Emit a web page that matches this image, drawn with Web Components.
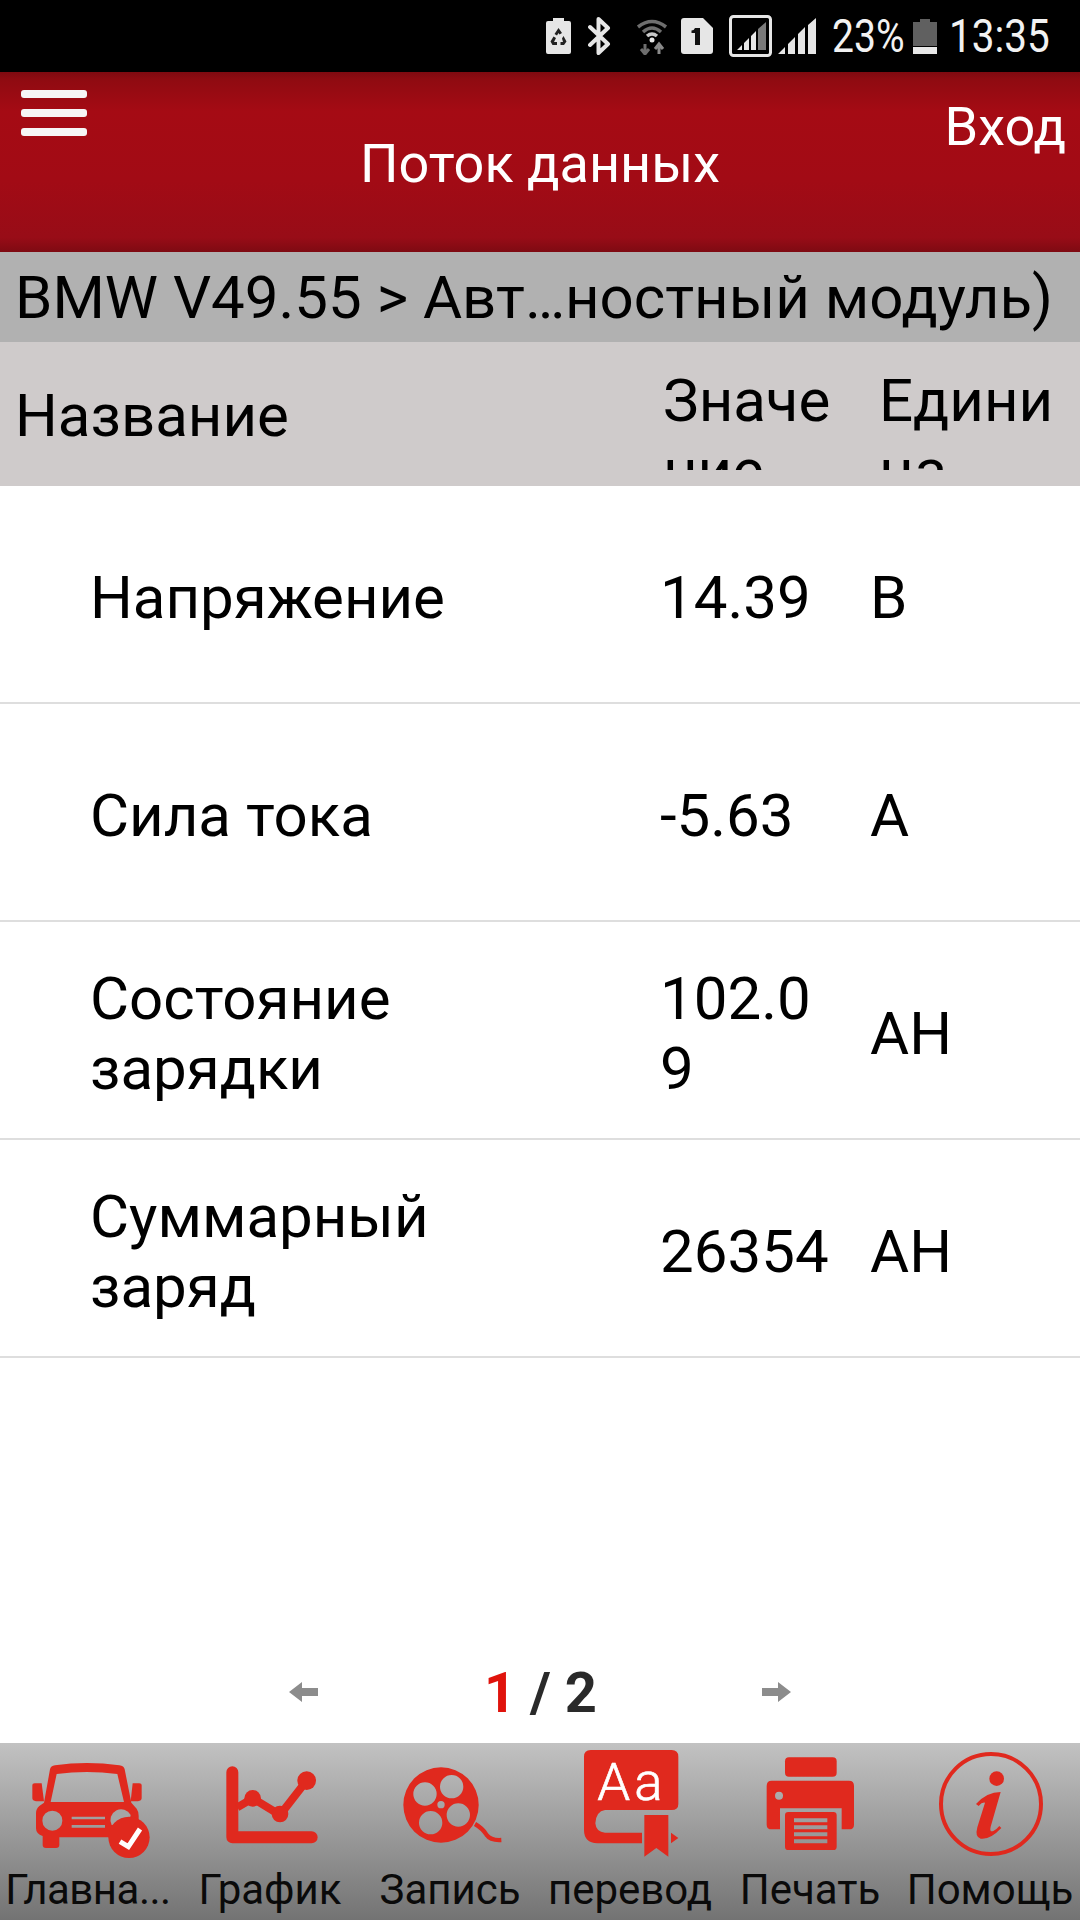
<!DOCTYPE html>
<html lang="ru"><head><meta charset="utf-8"><title>Поток данных</title>
<style>
html,body{margin:0;padding:0;background:#fff}
body{width:1080px;height:1920px;overflow:hidden;font-family:Roboto,"Noto Sans",sans-serif;color:#000;display:flex;flex-direction:column}
main-list{flex:1}
</style></head><body>
<status-bar></status-bar>
<app-header title-text="Поток данных" action="Вход"></app-header>
<crumb-bar>BMW V49.55 &gt; Авт…ностный модуль)</crumb-bar>
<table-head></table-head>
<main-list>
  <data-row name="Напряжение" value="14.39" unit="В"></data-row>
  <data-row name="Сила тока" value="-5.63" unit="А"></data-row>
  <data-row name="Состояние зарядки" value="102.09" unit="АН"></data-row>
  <data-row name="Суммарный заряд" value="26354" unit="АН"></data-row>
</main-list>
<tool-bar>
  <tool-item label="Главна..." style="--ls:-.5px;--mr:4px">
    <svg viewBox="0 39 540 360" width="180" height="120" fill="#e0291e"><path fill-rule="evenodd" d="M132 218 150 118Q152 108 165 106 260 92 358 106 372 108 374 118L394 218 410 236Q416 244 416 258V305Q416 320 400 322H178V345Q178 354 168 354H138Q128 354 128 345V318Q108 312 108 295V250Q108 236 118 228ZM170 132 152 216H372L352 132Q260 120 170 132ZM157 242A30 30 0 1 0 157.1 302 30 30 0 1 0 157 242ZM215 260V268H315V260ZM215 285V293H315V285Z"/><path d="M97 165Q97 160 104 160H125L132 214H108Q97 212 97 205ZM425 165Q425 160 418 160H398L392 214H414Q425 212 425 205Z"/><path fill="#a5a5a5" d="M335 285A32 32 0 0 1 392 255L385 285Z"/><circle cx="387" cy="322" r="62"/><path d="M360 335 385 350 420 297" fill="none" stroke="#fff" stroke-width="15"/></svg>
  </tool-item>
  <tool-item label="График">
    <svg viewBox="540 39 540 360" width="180" height="120" fill="#e0291e"><path d="M697 127V322H935" fill="none" stroke="#e0291e" stroke-width="36" stroke-linecap="round" stroke-linejoin="round"/><path d="M712 232 758 205 840 255 920 152" fill="none" stroke="#e0291e" stroke-width="24"/><circle cx="758" cy="205" r="25"/><circle cx="840" cy="252" r="25"/><circle cx="920" cy="152" r="28"/></svg>
  </tool-item>
  <tool-item label="Запись">
    <svg viewBox="0 39 540 360" width="180" height="120" fill="#e0291e"><path fill-rule="evenodd" d="M243 112A113 113 0 1 0 243.1 338 113 113 0 1 0 243 112ZM195 157A35 35 0 1 1 194.9 227 35 35 0 1 1 195 157ZM275 135A35 35 0 1 1 274.9 205 35 35 0 1 1 275 135ZM212 243A35 35 0 1 1 211.9 313 35 35 0 1 1 212 243ZM295 220A35 35 0 1 1 294.9 290 35 35 0 1 1 295 220ZM243 213A11 11 0 1 0 243.1 235 11 11 0 1 0 243 213Z"/><path d="M345 282Q368 295 380 315 392 332 424 330" fill="none" stroke="#e0291e" stroke-width="13"/></svg>
  </tool-item>
  <tool-item label="перевод">
    <svg viewBox="540 39 540 360" width="180" height="120" fill="#e0291e"><path d="M692 60H935Q955 60 955 80V222Q955 240 935 240H735Q708 244 706 280 708 306 735 308H846V340H712Q672 338 672 300V80Q672 60 692 60Z"/><path d="M853 255H925V380L889 354 853 380Z"/><path d="M933 308 955 324 933 340Z"/><text x="712" y="210" font-family="Roboto,sans-serif" font-weight="300" font-size="158" letter-spacing="12" stroke="#fff" stroke-width="2" fill="#fff">Aa</text></svg>
  </tool-item>
  <tool-item label="Печать">
    <svg viewBox="0 39 540 360" width="180" height="120" fill="#e0291e"><rect x="195" y="82" width="155" height="58" rx="12"/><path fill-rule="evenodd" d="M155 152H387Q402 152 402 168V284Q402 298 387 298H365V235H180V298H155Q140 298 140 284V168Q140 152 155 152ZM177 185A12 12 0 1 0 177.1 209 12 12 0 1 0 177 185Z"/><path fill-rule="evenodd" d="M205 246H340Q350 246 350 256V350Q350 360 340 360H205Q195 360 195 350V256Q195 246 205 246ZM222 265V277H322V265ZM222 286V298H322V286ZM222 307V319H322V307ZM222 328V340H322V328Z"/></svg>
  </tool-item>
  <tool-item label="Помощь">
    <svg viewBox="540 39 540 360" width="180" height="120" fill="#e0291e"><circle cx="813" cy="222" r="150" fill="none" stroke="#e0291e" stroke-width="12"/><circle cx="830" cy="146" r="22"/><path d="M768 222Q800 186 842 186L812 290Q808 308 820 303 830 298 838 288L844 294Q810 330 782 326 764 322 772 292L795 218Q786 216 776 228Z"/></svg>
  </tool-item>
</tool-bar>
<script>
function def(name, css, html, extra){
  customElements.define(name, class extends HTMLElement{
    constructor(){super();this.attachShadow({mode:"open"});}
    connectedCallback(){
      const h = typeof html==="function"?html(this):html;
      this.shadowRoot.innerHTML=`<style>${css}</style>${h}`;
    }
  });
}
def("status-bar",`
:host{display:flex;flex:none;height:72px;background:#000;align-items:center;padding-left:546px;box-sizing:border-box;color:#f2f2f2;font:400 46px Roboto,sans-serif}
svg{display:block;flex:none}
.t{display:block;flex:none;transform-origin:left center;white-space:nowrap;line-height:72px}
.a{width:70px;transform:scaleX(.85)}
.b{width:96px;margin-left:12px;transform:scaleX(.88)}
`,`
<svg width="25" height="36" viewBox="0 0 25 36" style="margin-right:17px"><path fill="#e6e6e6" d="M7 0H18V3H23Q25 3 25 5V34Q25 36 23 36H2Q0 36 0 34V5Q0 3 2 3H7Z"/><path d="M12.5 10 16 15 13.5 16.500 12.500 15 11 17.500 8.500 16ZM17.500 18 20.500 23.500 18 27H14.500V24H17L16 20.500ZM7.500 18.500 10 20 8 24H11V27H6.500L4.500 23.500Z" fill="#222"/></svg>
<svg width="23" height="38" viewBox="0 0 23 38" style="margin-right:25px"><path d="M2 10 20 27 10.500 36V2L20 11 2 28" fill="none" stroke="#e6e6e6" stroke-width="4" stroke-linejoin="round" stroke-linecap="round"/></svg>
<svg width="32" height="38" viewBox="0 0 32 38" style="margin-right:13px" fill="none" stroke="#6e6e6e"><path d="M2 10Q16-1 30 10" stroke-width="3.500"/><path d="M7 15Q16 7 25 15" stroke-width="3.500"/><path d="M11 19Q16 15 21 19" stroke-width="3.500" stroke="#c8c8c8"/><circle cx="16" cy="23" r="2.500" fill="#e6e6e6" stroke="none"/><path d="M9 27V37M5 32 9 37 13 32" stroke-width="3" stroke="#6e6e6e"/><path d="M23 37V27M19 32 23 27 27 32" stroke-width="3" stroke="#8a8a8a"/></svg>
<svg width="32" height="36" viewBox="0 0 32 36" style="margin-right:16px"><path fill="#e6e6e6" d="M3 0H22L32 10V33Q32 36 29 36H3Q0 36 0 33V3Q0 0 3 0Z"/><path fill="#111" d="M14 10H19V27H14V15H10.500V12.500Q13 12.500 14 10Z"/></svg>
<svg width="43" height="42" viewBox="0 0 43 42" style="margin-right:6px"><rect x="1.500" y="1.500" width="40" height="39" rx="3" fill="none" stroke="#e6e6e6" stroke-width="3"/><path fill="#e6e6e6" d="M8 35 13 30V35ZM15 28 20 23V35H15ZM22 21 27 16V35H22Z"/><path fill="#7a7a7a" d="M29 14 37 7V35H29Z"/></svg>
<svg width="38" height="37" viewBox="0 0 38 37" style="margin-right:16px" fill="#e6e6e6"><path d="M0 36 7 29V36ZM10 26 17 19V36H10ZM20 16 27 9V36H20ZM30 7 38 0V36H30Z"/></svg>
<span class="t a">23%</span>
<svg width="24" height="35" viewBox="0 0 24 35" style="margin-left:11px"><path fill="#606060" d="M7 0H17V3H24V27H0V3H7Z"/><rect y="28" width="24" height="7" fill="#e8e8e8"/></svg>
<span class="t b">13:35</span>
`);
def("app-header",`
:host{display:grid;grid-template-columns:1fr auto 1fr;flex:none;height:180px;color:#fff;box-sizing:border-box;background:linear-gradient(#7e0a10 0,#8f0b11 4%,#a50b14 22%,#a20b15 60%,#980c17 92%,#7e0a12 100%)}
.m{display:flex;flex-direction:column;gap:11px;margin:18px 0 0 21px;width:66px}
.m i{display:block;height:8px;border-radius:3px;background:#f6f6f6}
.t{font-size:54px;padding-top:57px;line-height:70px;white-space:nowrap}
.a{justify-self:end;font-size:54px;line-height:70px;padding:20px 14px 0 0}
`,h=>`<div class="m"><i></i><i></i><i></i></div><div class="t">${h.getAttribute("title-text")}</div><div class="a">${h.getAttribute("action")}</div>`);
def("crumb-bar",`
:host{display:block;flex:none;height:90px;line-height:92px;padding-left:15px;background:#b1b1b1;font-size:60px;white-space:nowrap;overflow:hidden}
`,`<slot></slot>`);
def("table-head",`
:host{display:flex;flex:none;height:144px;background:#cfcbcb;font-size:60px;line-height:70px;box-sizing:border-box;padding-left:15px}
.n{width:648px;align-self:center;padding-top:4px}
.c{height:104px;overflow:hidden;margin-top:24px;overflow-wrap:anywhere}
.v{width:180px;margin-right:36px}
.u{width:185px}
`,`<div class="n">Название</div><div class="c v">Значение</div><div class="c u">Единица</div>`);
def("main-list",`
:host{display:flex;flex-direction:column;min-height:0}
.p{margin-top:auto}
`,`<slot></slot><pager-bar class="p" current="1" total="2"></pager-bar>`);
def("data-row",`
:host{display:flex;flex:none;height:218px;box-sizing:border-box;border-bottom:2px solid #dedede;align-items:center;font-size:60px;line-height:70px;padding:7px 0 0 90px}
.n{width:570px}.n span{display:block;width:440px}
.v{width:178px;margin-right:32px;overflow-wrap:anywhere}
`,h=>`<div class="n"><span>${h.getAttribute("name")}</span></div><div class="v">${h.getAttribute("value")}</div><div class="u">${h.getAttribute("unit")}</div>`);
def("pager-bar",`
:host{display:flex;flex:none;height:100px;align-items:center;justify-content:center;gap:166px;color:#2a2a2a;font:700 56px/100px Roboto,sans-serif}
svg{display:block;position:relative;top:-1px}
.t{width:112px;text-align:center;white-space:nowrap}
b{color:#e0130c;font-weight:700}
`,h=>`<svg width="29" height="20" viewBox="0 0 29 20"><path fill="#8c8c8c" d="M0 10 13 0V6H29V14H13V20Z"/></svg><div class="t"><b>${h.getAttribute("current")}</b> / ${h.getAttribute("total")}</div><svg width="29" height="20" viewBox="0 0 29 20"><path fill="#8c8c8c" d="M29 10 16 0V6H0V14H16V20Z"/></svg>`);
def("tool-bar",`
:host{display:grid;grid-template-columns:repeat(6,180px);flex:none;height:177px;background:linear-gradient(#c2c2c2,#737373)}
`,`<slot></slot>`);
def("tool-item",`
:host{display:flex;flex-direction:column;align-items:center;min-width:0}
::slotted(svg){display:block;flex:none}
.l{font-size:42px;line-height:50px;white-space:nowrap;color:#0a0a0a;margin-top:2px;letter-spacing:var(--ls,0);margin-right:var(--mr,0)}
`,h=>`<slot></slot><div class="l">${h.getAttribute("label")}</div>`);
</script>
</body></html>
